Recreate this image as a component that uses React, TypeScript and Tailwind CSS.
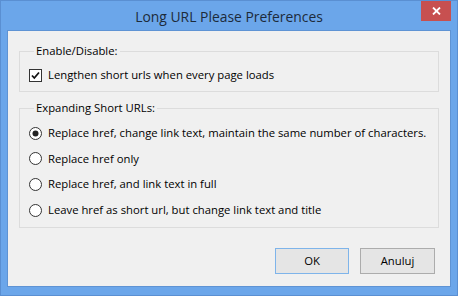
import { useState } from "react";

const options = [
  "Replace href, change link text, maintain the same number of characters.",
  "Replace href only",
  "Replace href, and link text in full",
  "Leave href as short url, but change link text and title",
];

function CheckBox({ checked }: { checked: boolean }) {
  return (
    <svg width="13" height="13" viewBox="0 0 13 13" className="shrink-0">
      <rect x="0.5" y="0.5" width="12" height="12" fill="#fff" stroke="#333" />
      {checked && (
        <path d="M3 6.5 L5.3 9 L10 3.5" fill="none" stroke="#111" strokeWidth="1.8" />
      )}
    </svg>
  );
}

function Radio({ checked }: { checked: boolean }) {
  return (
    <svg width="13" height="13" viewBox="0 0 13 13" className="shrink-0">
      <circle cx="6.5" cy="6.5" r="6" fill="#fff" stroke="#333" />
      {checked && <circle cx="6.5" cy="6.5" r="3" fill="#222" />}
    </svg>
  );
}

export default function App() {
  const [enabled, setEnabled] = useState(true);
  const [mode, setMode] = useState(0);

  return (
    <div
      className="w-[458px] h-[296px] bg-[#6ba6ea] border border-[#5a8fd2] flex flex-col text-[11.3px] leading-4 text-black whitespace-nowrap"
      style={{ fontFamily: '"Open Sans", "Noto Sans", sans-serif' }}
    >
      {/* title bar */}
      <div className="h-[29px] flex items-start shrink-0">
        <div className="flex-1 pl-[36px] pt-[6px] text-center text-[13.9px] leading-5 text-[#1d2b3a]">
          Long URL Please Preferences
        </div>
        <button className="w-[30px] h-[20px] mr-[6px] bg-[#c75050] flex items-center justify-center">
          <svg width="9" height="8" viewBox="0 0 9 8">
            <path d="M1 0.5 L8 7.5 M8 0.5 L1 7.5" stroke="#fff" strokeWidth="1.8" />
          </svg>
        </button>
      </div>

      {/* client area */}
      <div className="mx-[6px] h-[257px] bg-[#f0f0f0] border border-[#5e93d4] flex flex-col px-[11px] pt-[12px]">
        <fieldset className="border border-[#dcdcdc] px-[9px] pb-[8px]">
          <legend className="ml-[5px] px-[2px]">Enable/Disable:</legend>
          <label className="flex items-center gap-[6px] mt-[8px]" onClick={() => setEnabled(!enabled)}>
            <CheckBox checked={enabled} />
            <span>Lengthen short urls when every page loads</span>
          </label>
        </fieldset>

        <fieldset className="border border-[#dcdcdc] px-[9px] pb-[9px] mt-[8px]">
          <legend className="ml-[5px] px-[2px]">Expanding Short URLs:</legend>
          <div className="flex flex-col gap-[9.7px] mt-[9px]">
            {options.map((o, i) => (
              <label key={i} className="flex items-center gap-[6px]" onClick={() => setMode(i)}>
                <Radio checked={mode === i} />
                <span>{o}</span>
              </label>
            ))}
          </div>
        </fieldset>

        <div className="flex justify-end gap-[11px] mt-[20px] pr-[4px]">
          <button className="w-[74px] h-[26px] border border-[#7eb4ea] bg-[#e5e5e5]">OK</button>
          <button className="w-[75px] h-[26px] border border-[#acacac] bg-[#e5e5e5]">Anuluj</button>
        </div>
      </div>
    </div>
  );
}
